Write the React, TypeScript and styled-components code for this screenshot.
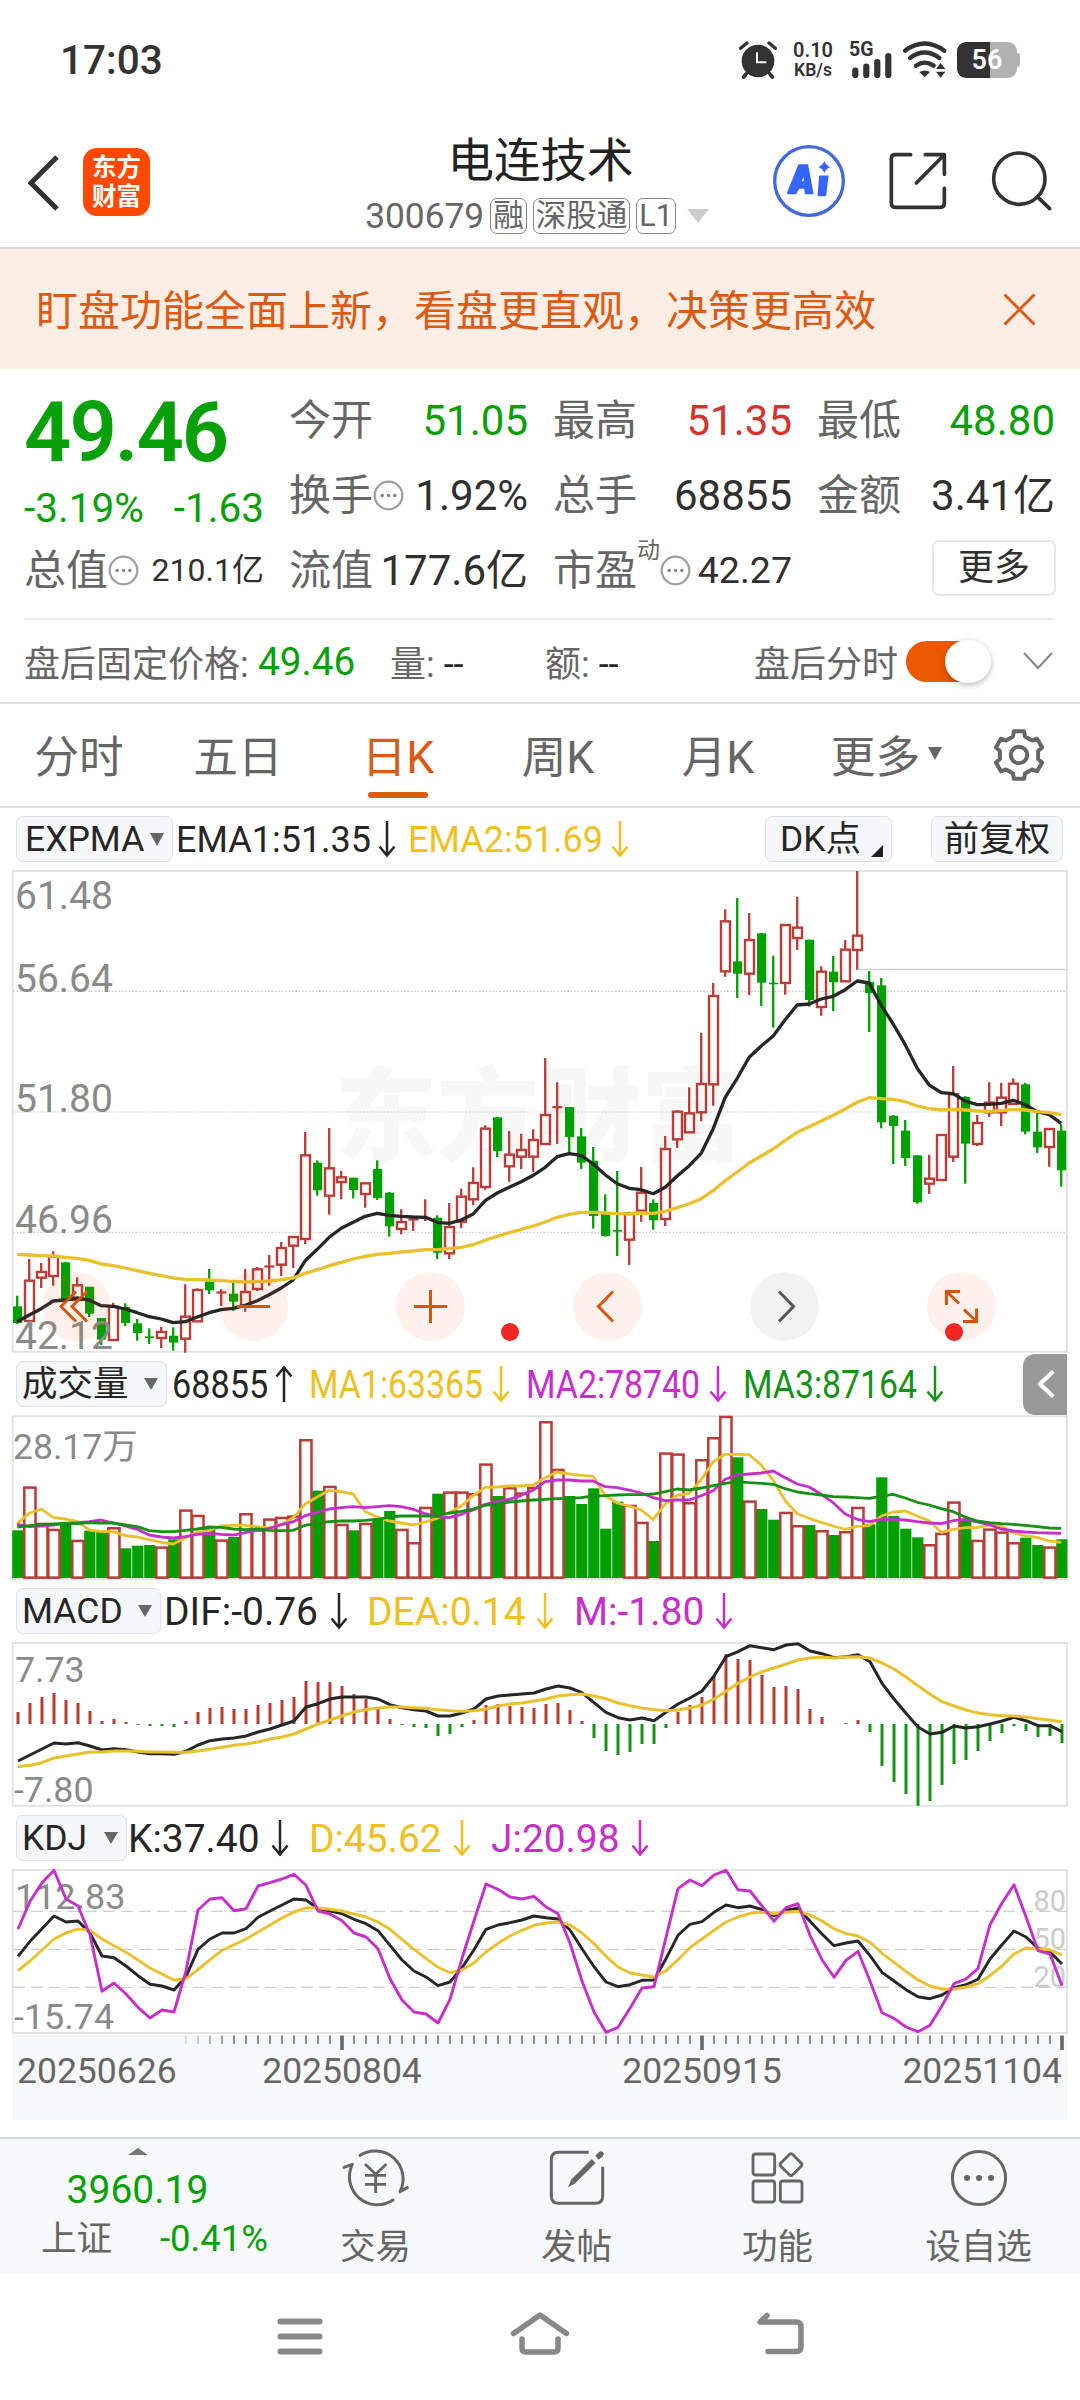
import React from "react";
import styled, { createGlobalStyle } from "styled-components";

const C = {
  green: "#08a008",
  red: "#d8322e",
  barRed: "#bb3b37",
  barGreen: "#00a000",
  orange: "#dc5a12",
  ink: "#262626",
  gray: "#666",
  axis: "#8a8a8a",
  line: "#e2e2e2",
  yellow: "#efc022",
  purple: "#c62fca",
  darkGreen: "#169116",
  black: "#262626",
};

const Global = createGlobalStyle`
  html, body { margin: 0; padding: 0; background: #fff; }
  * { box-sizing: border-box; }
  body { font-family: Roboto, "Noto Sans CJK SC", sans-serif; color: ${C.ink}; }
  svg { display: block; flex: none; overflow: visible; }
`;

/* ---------- chart data, in thirds of a pixel below each panel's origin ---------- */

const nums = (s: string) => s.trim().split(/\s+/).map(Number);

const candles = `G 1307 1340 1388 1392|R 1197 1262 1383 1385|R 1209 1236 1253 1284|R 1174 1190 1248 1277|G 1206 1208 1318 1318|R 1252 1276 1320 1320|G 1281 1281 1360 1371|G 1374 1375 1438 1455|R 1328 1340 1440 1440|G 1330 1342 1388 1398|G 1377 1391 1418 1442|G 1405 1430 1431 1452|R 1400 1416 1434 1464|G 1402 1428 1447 1472|R 1273 1370 1436 1478|R 1285 1290 1384 1384|G 1227 1265 1290 1302|R 1287 1296 1300 1338|G 1268 1302 1324 1353|R 1227 1296 1338 1355|R 1221 1228 1287 1293|R 1185 1218 1219 1277|R 1146 1164 1214 1248|R 1130 1131 1157 1224|R 816 886 1137 1152|G 901 909 990 1007|R 804 925 1007 1064|R 933 952 966 1018|G 953 954 989 1015|R 968 970 1002 1043|G 901 928 1013 1020|G 996 999 1098 1130|R 1048 1086 1107 1123|R 1075 1077 1080 1113|R 1018 1072 1073 1083|G 1066 1074 1177 1197|R 1029 1101 1180 1197|R 986 1010 1085 1105|R 922 969 1018 1036|R 796 806 981 989|G 771 773 872 891|R 813 884 919 965|R 821 870 890 927|R 808 840 890 936|R 594 765 852 852|R 667 740 741 852|G 741 742 830 880|G 804 830 907 927|G 861 903 1067 1106|G 1003 1060 1127 1130|G 933 1111 1113 1188|R 1055 1060 1139 1215|R 921 998 1052 1085|G 1018 1030 1080 1109|R 828 867 1077 1098|R 751 755 838 864|R 682 760 817 817|R 518 672 757 784|R 369 408 673 737|R 148 184 334 350|G 114 305 340 414|R 159 240 341 405|G 219 221 367 438|G 287 369 371 503|R 194 195 369 404|R 110 203 234 270|G 239 240 419 440|R 319 335 441 467|G 288 336 366 453|R 240 269 364 364|R 33 227 270 329|G 333 367 398 516|G 354 377 786 805|G 765 768 797 912|G 780 813 893 918|G 885 887 1026 1031|R 884 956 971 1002|R 823 825 960 960|R 618 703 890 906|G 708 712 850 971|R 765 789 852 858|R 667 728 757 771|R 668 713 757 799|R 655 671 732 732|G 669 674 814 823|G 757 816 861 879|R 806 807 861 920|G 792 813 930 980`
  .split("|")
  .map((row) => {
    const [side, ...v] = row.split(" ");
    return { up: side === "R", v: v.map(Number) };
  });

const ema1 = nums(`1385 1365 1346 1323 1320 1314 1320 1337 1339 1347 1358 1370 1377 1388 1385 1371 1358 1349 1345 1336 1322 1304 1284 1260 1202 1168 1132 1105 1087 1069 1060 1066 1069 1071 1072 1087 1090 1080 1062 1022 999 982 965 946 922 890 881 886 912 944 971 985 989 1001 982 948 917 880 806 712 655 592 558 528 479 435 432 417 409 389 363 369 436 492 554 625 675 698 701 723 734 733 730 721 734 755 764 790`);
const ema2 = nums(`1183 1185 1187 1188 1192 1195 1201 1212 1217 1224 1232 1240 1247 1254 1258 1259 1260 1262 1264 1266 1265 1263 1259 1254 1240 1229 1217 1207 1197 1189 1183 1180 1176 1173 1169 1169 1166 1162 1154 1141 1129 1118 1108 1098 1086 1072 1063 1057 1057 1059 1061 1062 1059 1060 1054 1043 1031 1016 992 962 936 909 888 867 841 817 800 783 766 747 727 713 716 718 725 738 746 750 748 750 753 754 752 748 750 755 758 764`);

const volumes = nums(`541 411 520 538 523 571 542 545 533 595 587 585 591 568 480 496 535 570 561 491 540 507 502 498 269 422 409 523 541 520 505 483 538 578 472 431 426 426 431 342 438 413 429 412 215 358 438 462 415 536 455 466 517 573 309 312 458 329 263 199 322 453 477 509 487 527 525 542 555 545 472 523 382 498 536 562 584 550 456 510 571 537 546 578 563 585 591 568`);
const ma1 = nums(`520 490 477 502 507 514 540 545 545 557 561 569 577 582 564 547 542 528 526 526 530 534 524 503 462 441 421 425 432 485 501 513 519 525 516 505 488 468 437 412 411 408 408 405 383 366 372 376 379 437 459 468 480 509 462 436 430 389 335 313 313 314 345 391 452 491 505 517 528 538 529 527 498 486 483 498 512 547 538 533 533 525 528 548 558 562 573 577`);
const ma2 = nums(`523 530 528 525 520 518 515 510 519 528 538 555 561 564 560 553 550 553 555 548 541 535 524 515 497 487 477 473 470 473 470 467 470 478 491 500 503 493 480 463 455 448 436 420 395 390 390 393 393 410 413 420 429 443 452 450 450 437 422 388 375 372 369 363 383 402 411 433 458 492 508 515 508 508 510 515 519 521 512 508 516 524 537 543 546 548 549 550`);
const ma3 = nums(`531 527 524 522 520 521 518 519 519 525 530 542 545 545 541 537 531 532 537 539 537 541 542 541 526 520 515 513 513 511 508 501 498 498 498 497 489 484 477 466 462 456 453 450 448 446 445 443 438 437 435 434 434 432 425 417 420 414 407 400 395 398 400 403 416 426 431 435 440 441 443 445 438 433 444 457 465 476 485 501 513 518 521 523 526 530 534 535`);

const hist = nums(`1086 1059 1041 1029 1050 1059 1083 1113 1107 1116 1125 1128 1128 1131 1113 1086 1074 1071 1077 1077 1065 1059 1050 1041 993 996 996 1008 1032 1047 1074 1107 1125 1131 1134 1158 1152 1131 1110 1065 1062 1068 1071 1074 1062 1059 1080 1113 1164 1203 1215 1206 1182 1182 1134 1086 1065 1041 978 912 927 930 975 1011 1008 1017 1077 1101 1122 1119 1110 1146 1248 1296 1332 1367 1353 1305 1242 1230 1203 1173 1149 1128 1143 1161 1158 1179`);
const dif = nums(`1233 1215 1197 1179 1182 1178 1188 1200 1196 1199 1206 1211 1211 1213 1204 1185 1172 1167 1164 1158 1146 1137 1125 1113 1071 1061 1047 1041 1041 1041 1047 1064 1073 1079 1083 1098 1098 1089 1077 1047 1038 1035 1032 1029 1017 1008 1014 1028 1058 1087 1103 1110 1104 1112 1087 1062 1044 1023 978 920 905 887 893 899 885 881 903 911 923 920 914 935 1000 1047 1090 1131 1152 1147 1128 1134 1130 1122 1113 1102 1112 1127 1127 1145`);
const dea = nums(`1250 1246 1238 1224 1218 1212 1206 1206 1203 1203 1204 1206 1206 1207 1207 1203 1198 1192 1186 1182 1176 1167 1161 1152 1137 1122 1110 1098 1086 1079 1074 1071 1071 1073 1075 1079 1082 1084 1082 1077 1068 1062 1059 1053 1047 1038 1034 1032 1038 1046 1059 1067 1074 1079 1082 1080 1074 1065 1047 1024 1000 981 965 954 942 930 924 921 924 921 920 924 939 957 981 1007 1033 1055 1068 1080 1089 1094 1097 1098 1101 1106 1110 1116`);

const kK = nums(`469 424 386 348 366 363 399 468 473 498 527 553 558 570 530 448 417 399 399 386 352 333 315 297 300 326 333 341 358 371 392 436 480 513 531 557 546 503 449 388 375 368 360 348 353 357 390 446 500 546 560 554 541 540 476 406 373 365 337 315 323 318 329 347 331 325 364 402 437 429 423 467 517 543 569 590 596 585 563 554 538 477 434 393 411 445 456 492`);
const kD = nums(`512 483 450 417 399 387 391 417 437 457 480 504 522 540 536 509 479 451 434 417 396 375 354 336 324 324 328 333 342 351 366 388 418 448 475 502 518 510 489 456 430 408 391 376 369 366 375 399 431 469 501 519 525 531 512 479 443 417 391 366 351 340 337 341 337 334 345 363 386 401 408 427 460 487 514 540 558 567 567 561 551 527 498 462 444 447 450 465`);
const kJ = nums(`387 304 248 211 297 318 404 574 549 582 622 654 630 636 513 330 297 293 332 326 258 248 237 223 256 333 342 362 399 411 446 536 600 636 642 669 598 475 362 252 268 291 297 289 321 341 430 543 636 697 682 625 564 560 412 266 240 257 225 211 269 273 318 364 323 311 406 479 532 481 454 543 638 655 681 695 676 617 551 537 505 374 309 254 350 452 462 557`);

const cx = (i: number) => 17.2 + i * 12;

const Line = ({ data, base, color, w = 3.3, dx = 0 }: { data: number[]; base: number; color: string; w?: number; dx?: number }) => (
  <polyline
    fill="none"
    stroke={color}
    strokeWidth={w}
    strokeLinejoin="round"
    points={data.map((v, i) => `${cx(i) + dx},${(base + v / 3).toFixed(1)}`).join(" ")}
  />
);

/* ---------- page parts ---------- */

const Page = styled.div`
  width: 1080px;
  height: 2400px;
  display: flex;
  flex-direction: column;
  background: #fff;
  overflow: hidden;
`;

const StatusBar = styled.div`
  height: 120px;
  flex: none;
  display: flex;
  align-items: center;
  padding: 0 60px 0 60px;
`;
const Clock = styled.div`
  font-size: 40.5px;
  font-weight: 500;
  color: #333;
  margin-right: auto;
`;
const NetSpeed = styled.div`
  width: 46px;
  margin: 0 14px 0 13px;
  text-align: center;
  font-size: 20px;
  line-height: 20px;
  font-weight: 600;
  color: #333;
  white-space: nowrap;
`;
const SpeedUnit = styled.div`
  font-size: 17.5px;
`;
const Battery = styled.div`
  width: 60px;
  height: 36px;
  margin-left: 9px;
  border-radius: 9px;
  background: linear-gradient(90deg, #333 55%, #b1b1b1 55%);
  color: #fff;
  font-size: 27px;
  font-weight: 600;
  line-height: 36px;
  text-align: center;
`;
const BatteryTip = styled.div`
  width: 3px;
  height: 14px;
  background: #b1b1b1;
  border-radius: 0 3px 3px 0;
`;

const Header = styled.header`
  height: 129px;
  flex: none;
  display: flex;
  align-items: flex-start;
  border-bottom: 2px solid #d9d9d9;
`;
const HeaderSide = styled.div<{ $w: number; $pl: number; $gap: number }>`
  width: ${(p) => p.$w}px;
  padding: 25px 0 0 ${(p) => p.$pl}px;
  display: flex;
  align-items: center;
  gap: ${(p) => p.$gap}px;
`;
const Logo = styled.div`
  width: 67px;
  height: 68px;
  margin: 3px 0 0 -1px;
  border-radius: 14px;
  background: #ff4800;
  color: #fff;
  font-size: 24.5px;
  font-weight: 700;
  line-height: 29px;
  text-align: center;
  padding-top: 5px;
`;
const Titles = styled.div`
  width: 440px;
  padding-top: 11px;
  display: flex;
  flex-direction: column;
  align-items: center;
`;
const Title = styled.div`
  font-size: 46.5px;
  line-height: 60px;
  color: #222;
  margin-left: -1px;
`;
const Sub = styled.div`
  display: flex;
  align-items: center;
  height: 36px;
  margin: 7px 0 0 -8px;
  font-size: 35.3px;
  color: ${C.gray};
`;
const Tag = styled.span`
  height: 36px;
  margin-left: 6px;
  padding: 0 2px;
  border: 1.5px solid #888;
  border-radius: 7px;
  font-size: 30.5px;
  line-height: 33px;
`;

const Caret = styled.span<{ $w: number; $h: number; $color?: string; $ml?: number }>`
  width: 0;
  height: 0;
  flex: none;
  margin-left: ${(p) => p.$ml ?? 0}px;
  border-left: ${(p) => p.$w / 2}px solid transparent;
  border-right: ${(p) => p.$w / 2}px solid transparent;
  border-top: ${(p) => p.$h}px solid ${(p) => p.$color ?? C.gray};
`;

const Banner = styled.div`
  height: 120px;
  flex: none;
  display: flex;
  align-items: center;
  justify-content: space-between;
  padding: 0 44px 0 36px;
  background: #fdeee5;
  color: ${C.orange};
  font-size: 42px;
  line-height: 60px;
`;
const BannerText = styled.span`
  padding-top: 6px;
`;

const Quote = styled.section`
  height: 335px;
  flex: none;
  padding: 14px 25px 0 24px;
  border-bottom: 2px solid #dcdcdc;
`;
const QuoteGrid = styled.div`
  display: grid;
  grid-template-columns: 240px 239px 239px 238px;
  grid-template-rows: repeat(3, 75px);
  column-gap: 25px;
  height: 235px;
`;
const Last = styled.div`
  grid-row: 1 / 3;
  display: flex;
  flex-direction: column;
  color: ${C.green};
`;
const Price = styled.div`
  font-size: 83px;
  font-weight: 600;
  letter-spacing: -2px;
  line-height: 100px;
`;
const Changes = styled.div`
  display: flex;
  justify-content: space-between;
  font-size: 40.5px;
  line-height: 51px;
`;
const Cell = styled.div<{ $size?: number; $color?: string }>`
  display: flex;
  align-items: center;
  font-size: 42px;
  line-height: 75px;
  color: ${C.gray};
  white-space: nowrap;
  & > b {
    font-weight: 400;
    margin-left: auto;
    font-size: ${(p) => p.$size ?? 42}px;
    color: ${(p) => p.$color ?? "#303030"};
  }
`;
const Sup = styled.sup`
  font-size: 23px;
  line-height: 24px;
  align-self: flex-start;
  margin-top: 6px;
`;
const MoreButton = styled.button`
  width: 124px;
  height: 56px;
  margin: 7px -1px 0 auto;
  padding: 0;
  background: #fff;
  border: 2px solid #e6e6e6;
  border-radius: 7px;
  font: inherit;
  font-size: 36px;
  line-height: 48px;
  color: #303030;
`;
const AfterHours = styled.div`
  height: 84px;
  border-top: 2px solid #ececec;
  display: flex;
  align-items: center;
  font-size: 36px;
  color: ${C.gray};
  white-space: nowrap;
`;
const Slot = styled.span<{ $w?: number; $color?: string; $size?: number }>`
  ${(p) => (p.$w ? `width: ${p.$w}px;` : "")}
  color: ${(p) => p.$color ?? "inherit"};
  font-size: ${(p) => p.$size ?? 36}px;
`;
const Toggle = styled.span`
  width: 80px;
  height: 41px;
  margin: 0 31px 0 8px;
  border-radius: 21px;
  background: #ec5800;
  display: flex;
  align-items: center;
  padding-left: 39px;
  &::after {
    content: "";
    flex: none;
    width: 46px;
    height: 43px;
    border-radius: 22px;
    background: #fff;
    box-shadow: 0 2px 6px rgba(0, 0, 0, 0.28);
  }
`;
const Expander = styled.span`
  margin: 0 2px 0 auto;
`;

const Tabs = styled.nav`
  height: 104px;
  flex: none;
  display: grid;
  grid-template-columns: 158px 160px 160px 160px 160px 177px 105px;
  border-bottom: 2px solid #dcdcdc;
`;
const Tab = styled.div<{ $active?: boolean }>`
  display: flex;
  align-items: center;
  justify-content: center;
  padding-bottom: 4px;
  font-size: 44.7px;
  color: ${(p) => (p.$active ? C.orange : C.gray)};
  position: relative;
  ${(p) =>
    p.$active
      ? `&::after { content: ""; position: absolute; bottom: 8px; left: 50px; width: 60px; height: 6px; border-radius: 3px; background: ${C.orange}; }`
      : ""}
`;
const SettingsTab = styled.div`
  display: flex;
  align-items: center;
  padding-left: 18px;
`;

const IndicatorRow = styled.div<{ $h: number }>`
  height: ${(p) => p.$h}px;
  flex: none;
  display: flex;
  align-items: center;
  padding-left: 16px;
  white-space: nowrap;
`;
const Picker = styled.button<{ $w: number; $ml?: number; $center?: boolean; $pl?: number }>`
  width: ${(p) => p.$w}px;
  height: 46px;
  flex: none;
  margin: 0 0 0 ${(p) => p.$ml ?? 0}px;
  padding: 0 ${(p) => (p.$center ? 5 : 8)}px 0 ${(p) => p.$pl ?? 5}px;
  display: flex;
  align-items: center;
  justify-content: ${(p) => (p.$center ? "center" : "space-between")};
  background: #f6f7fa;
  border: 1.5px solid #dfe1e6;
  border-radius: 7px;
  font: inherit;
  font-size: 35.5px;
  line-height: 42px;
  color: ${C.ink};
`;
const Reading = styled.div<{ $w: number; $ml: number; $color?: string; $size?: number; $squeeze?: number }>`
  width: ${(p) => p.$w}px;
  flex: none;
  margin-left: ${(p) => p.$ml}px;
  display: flex;
  align-items: center;
  justify-content: space-between;
  color: ${(p) => p.$color ?? C.ink};
  font-size: ${(p) => p.$size ?? 38}px;
  line-height: 46px;
  & > span {
    min-width: 0;
    padding-top: 2px;
    transform-origin: left;
    transform: scaleX(${(p) => p.$squeeze ?? 1});
  }
`;
const Corner = styled.i`
  align-self: flex-end;
  margin-bottom: 4px;
  border-left: 12px solid transparent;
  border-bottom: 12px solid #222;
`;
const SideHandle = styled.div`
  width: 44px;
  height: 61px;
  margin: 0 13px 0 auto;
  border-radius: 12px 0 0 12px;
  background: #999;
  display: flex;
  align-items: center;
  justify-content: center;
`;

const Panel = styled.div<{ $h: number }>`
  position: relative;
  width: 1056px;
  height: ${(p) => p.$h}px;
  flex: none;
  margin-left: 12px;
`;
const Controls = styled.div`
  position: absolute;
  left: 30px;
  bottom: 12px;
  display: flex;
  gap: 108px;
`;
const Round = styled.div<{ $muted?: boolean }>`
  width: 69px;
  height: 69px;
  border-radius: 50%;
  display: flex;
  align-items: center;
  justify-content: center;
  color: ${(p) => (p.$muted ? "#555" : "#d4570f")};
  background: ${(p) => (p.$muted ? "rgba(0,0,0,.05)" : "rgba(240,90,20,.09)")};
`;
const Dot = styled.i<{ $x: number }>`
  position: absolute;
  left: ${(p) => p.$x}px;
  bottom: 12px;
  width: 18px;
  height: 18px;
  border-radius: 50%;
  background: #ef2722;
`;
const Axis = styled.div`
  width: 1056px;
  height: 85px;
  margin: 1px 0 17px 12px;
  flex: none;
  background: #f7f8fa;
`;

const BottomBar = styled.footer`
  height: 137px;
  flex: none;
  display: flex;
  background: #f6f8fa;
  border-top: 2px solid #d6d8da;
`;
const IndexBox = styled.div`
  width: 275px;
  display: flex;
  flex-direction: column;
  align-items: center;
  padding-top: 9px;
  color: ${C.green};
`;
const UpMark = styled.i`
  border-left: 10px solid transparent;
  border-right: 10px solid transparent;
  border-bottom: 7px solid #777;
`;
const IndexValue = styled.div`
  font-size: 39px;
  line-height: 46px;
  margin-top: 12px;
`;
const IndexLine = styled.div`
  width: 227px;
  display: flex;
  justify-content: space-between;
  align-items: center;
  font-size: 36.5px;
  line-height: 46px;
  margin: 3px 0 0 34px;
`;
const Muted = styled.span`
  color: ${C.gray};
  font-size: 35.5px;
`;
const Action = styled.div`
  width: 201px;
  display: flex;
  flex-direction: column;
  align-items: center;
  padding-top: 8px;
  font-size: 35.5px;
  line-height: 46px;
  color: ${C.gray};
  & > svg {
    margin-bottom: 15px;
  }
`;
const NavBar = styled.div`
  flex: 1;
  display: flex;
  justify-content: center;
  gap: 180px;
  padding-top: 30px;
`;

/* ---------- small drawings ---------- */

const Arrow = ({ up }: { up?: boolean }) => (
  <svg width="18" height="38" viewBox="0 0 18 38" fill="none" stroke="currentColor" strokeWidth="2.5" transform={up ? "rotate(180)" : undefined}>
    <path d="M9 1V36M1.5 26.5L9 35.5L16.5 26.5" />
  </svg>
);

const Info = () => (
  <svg width="31" height="31" viewBox="0 0 31 31" fill="none">
    <circle cx="15.5" cy="15.5" r="13.8" stroke="#a0a0a0" strokeWidth="2.3" />
    <g fill="#888">
      <circle cx="9.2" cy="15.5" r="1.8" />
      <circle cx="15.5" cy="15.5" r="1.8" />
      <circle cx="21.8" cy="15.5" r="1.8" />
    </g>
  </svg>
);

const gearPath = (() => {
  const pts: string[] = [];
  for (let k = 0; k < 6; k++) {
    const a = -90 + k * 60;
    ([[-18, 19.5], [-12, 24.3], [12, 24.3], [18, 19.5]] as number[][]).forEach(([d, r]) => {
      const t = ((a + d) * Math.PI) / 180;
      pts.push(`${(26 + r * Math.cos(t)).toFixed(1)} ${(26 + r * Math.sin(t)).toFixed(1)}`);
    });
  }
  return `M${pts.join("L")}Z`;
})();

const Gear = () => (
  <svg width="52" height="52" viewBox="0 0 52 52" fill="none" stroke="#666" strokeWidth="4" strokeLinejoin="round">
    <path d={gearPath} />
    <circle cx="26" cy="26" r="8.2" />
  </svg>
);

const WifiSvg = styled.svg`
  margin-left: 8px;
`;

const StatusIcons = () => (
  <>
    <svg width="38" height="38" viewBox="0 0 114 114" fill="none" stroke="#333">
      <circle cx="57" cy="60" r="49" fill="#333" stroke="none" />
      <path d="M5 22L24 6M109 22L90 6" strokeWidth="10" strokeLinecap="round" />
      <path d="M22 98L14 108M92 98L100 108" strokeWidth="11" strokeLinecap="round" />
      <path d="M54 34V64H82" stroke="#fff" strokeWidth="6" />
    </svg>
    <NetSpeed>
      0.10
      <SpeedUnit>KB/s</SpeedUnit>
    </NetSpeed>
    <svg width="44" height="38" viewBox="0 0 44 38">
      <text x="-1" y="14.5" fontSize="19.5" fontWeight="700" fill="#333">5G</text>
      <g stroke="#333" strokeWidth="6.2" strokeLinecap="round">
        <path d="M5.3 29.5V34M16.3 25.5V34M27.3 21V34M38.3 15V34" />
      </g>
    </svg>
    <WifiSvg width="46" height="38" viewBox="0 0 138 114" fill="none" stroke="#333" strokeWidth="13" strokeLinecap="round">
      <path d="M9 29Q68 -14 127 29M24 51Q68 18 112 51M42 74Q68 56 95 74" />
      <path d="M52 93Q68 84 84 93L68 109Z" fill="#333" stroke="none" />
      <path d="M116 66L130 84H102ZM116 110L130 92H102Z" fill="#333" stroke="none" />
    </WifiSvg>
  </>
);

const Frame = ({ y, h }: { y: number; h: number }) => (
  <rect x="12.7" y={y} width="1054.3" height={h} fill="none" stroke={C.line} strokeWidth="1.8" />
);

const MainChart = () => (
  <svg width="1056" height="483" viewBox="12 870 1056 483">
    <text x="335" y="1153" fontSize="102" fontWeight="900" fill="#f7f7f7" textLength="408">东方财富</text>
    <Frame y={871} h={480.7} />
    {[991.3, 1112, 1232.3].map((y) => (
      <path key={y} d={`M13 ${y}H1067`} stroke="#cfcfcf" strokeWidth="1.2" strokeDasharray="1.8 1.6" />
    ))}
    <path d="M857 969.3H1067" stroke="#d2d2d2" strokeWidth="1.3" />
    {candles.map(({ up, v }, i) => {
      const [hi, a, b, lo] = v.map((n) => 860 + n / 3);
      const x = cx(i);
      const color = up ? C.barRed : C.barGreen;
      return (
        <g key={i}>
          <path d={up ? `M${x} ${hi}V${a}M${x} ${b}V${lo}` : `M${x} ${hi}V${lo}`} stroke={color} strokeWidth="2.3" />
          {up ? (
            b - a < 2 ? (
              <rect x={x - 4.8} y={a - 0.6} width="10" height="2.2" fill={color} />
            ) : (
              <rect x={x - 4.2} y={a} width="9" height={b - a} fill="none" stroke={color} strokeWidth="2.4" />
            )
          ) : (
            <rect x={x - 4.2} y={a - 0.3} width="9.2" height={Math.max(b - a, 1) + 0.6} fill={color} />
          )}
        </g>
      );
    })}
    <g fontSize="39" fill={C.axis}>
      <text x="15" y="909.3">61.48</text>
      <text x="15" y="992">56.64</text>
      <text x="15" y="1112">51.80</text>
      <text x="15" y="1233">46.96</text>
      <text x="15" y="1349">42.12</text>
    </g>
    <Line data={ema1} base={860} color={C.black} />
    <Line data={ema2} base={860} color="#eac12c" />
  </svg>
);

const VolumeChart = () => (
  <svg width="1056" height="165" viewBox="12 1415 1056 165">
    <Frame y={1416.3} h={162.7} />
    <text x="13" y="1459" fontSize="35.6" fill={C.axis}>28.17万</text>
    {volumes.map((v, i) => {
      const top = 1350 + v / 3;
      return candles[i].up ? null : <rect key={i} x={cx(i) - 5} y={top} width="11.2" height={1578 - top} fill={C.barGreen} />;
    })}
    {volumes.map((v, i) => {
      const top = 1350 + v / 3;
      return candles[i].up ? (
        <rect key={i} x={cx(i) - 4.9} y={top + 0.6} width="11.2" height={1577 - top} fill="#fff" stroke={C.barRed} strokeWidth="2.5" />
      ) : null;
    })}
    <Line data={ma1} base={1350} color="#eac12c" w={2.8} />
    <Line data={ma2} base={1350} color={C.purple} w={2.8} />
    <Line data={ma3} base={1350} color={C.darkGreen} w={2.8} />
  </svg>
);

const MacdChart = () => (
  <svg width="1056" height="165" viewBox="12 1642 1056 165">
    <Frame y={1643} h={162.7} />
    <g fontSize="35.7" fill={C.axis}>
      <text x="15" y="1682">7.73</text>
      <text x="14" y="1802">-7.80</text>
    </g>
    {hist.map((v, i) => (
      <path key={i} d={`M${cx(i) + 0.8} 1724V${1350 + v / 3}`} stroke={v < 1122 ? C.barRed : C.darkGreen} strokeWidth="3" />
    ))}
    <Line data={dif} base={1350} color={C.black} w={3} dx={0.8} />
    <Line data={dea} base={1350} color="#eac12c" w={3} dx={0.8} />
  </svg>
);

const KdjChart = () => (
  <svg width="1056" height="165" viewBox="12 1869 1056 165">
    <Frame y={1870} h={163} />
    {[1911.3, 1949.3, 1987.3].map((y) => (
      <path key={y} d={`M13 ${y}H1067`} stroke="#cfcfcf" strokeWidth="1.3" strokeDasharray="12 6" />
    ))}
    <g fontSize="35.9" fill={C.axis}>
      <text x="15" y="1908.7">112.83</text>
      <text x="14" y="2029">-15.74</text>
    </g>
    <g fontSize="29" fill="#ccc" textAnchor="end">
      <text x="1066" y="1911">80</text>
      <text x="1066" y="1949">50</text>
      <text x="1066" y="1987">20</text>
    </g>
    <Line data={kK} base={1800} color={C.black} w={2.9} dx={0.8} />
    <Line data={kD} base={1800} color="#eac12c" w={2.9} dx={0.8} />
    <Line data={kJ} base={1800} color={C.purple} w={2.9} dx={0.8} />
  </svg>
);

const TimeAxis = () => (
  <svg width="1056" height="85" viewBox="12 2036 1056 85">
    {Array.from({ length: 74 }, (_, k) => k + 14).map((i) => {
      const big = i === 27 || i === 57 || i === 87;
      return (
        <path
          key={i}
          d={`M${cx(i) + 0.8} 2036.5V${big ? 2051 : 2045}`}
          stroke={big ? "#666" : "#8c8c8c"}
          strokeWidth={big ? 3.6 : 2}
          opacity={i < 18 ? (i - 12.5) / 6 : 1}
        />
      );
    })}
    <g fontSize="35.5" fill="#666">
      <text x="17" y="2084">20250626</text>
      <text x="342" y="2084" textAnchor="middle">20250804</text>
      <text x="702" y="2084" textAnchor="middle">20250915</text>
      <text x="1062" y="2084" textAnchor="end">20251104</text>
    </g>
  </svg>
);

const stroke = { fill: "none", stroke: "currentColor", strokeWidth: 3 };

export default function App() {
  return (
    <Page>
      <Global />
      <StatusBar>
        <Clock>17:03</Clock>
        <StatusIcons />
        <Battery>56</Battery>
        <BatteryTip />
      </StatusBar>

      <Header>
        <HeaderSide $w={321} $pl={26} $gap={24}>
          <svg width="34" height="62" viewBox="0 -4 34 62" fill="none" stroke="#333" strokeWidth="5">
            <path d="M31 3L5 29L31 55" />
          </svg>
          <Logo>东方<br />财富</Logo>
        </HeaderSide>
        <Titles>
          <Title>电连技术</Title>
          <Sub>
            300679
            <Tag>融</Tag>
            <Tag>深股通</Tag>
            <Tag>L1</Tag>
            <Caret $w={22} $h={14} $color="#ccc" $ml={11} />
          </Sub>
        </Titles>
        <HeaderSide $w={319} $pl={12} $gap={43}>
          <svg width="72" height="72" viewBox="0 0 216 216">
            <circle cx="108" cy="108" r="103" fill="none" stroke="#4468e0" strokeWidth="10" />
            <path fillRule="evenodd" fill="#3565fb" stroke="#3565fb" strokeWidth="5" strokeLinejoin="round" d="M78 60H103L119 145H98L96 129H77L68 145H44ZM93 83L83 111H95Z" />
            <path fill="#3565fb" stroke="#3565fb" strokeWidth="5" strokeLinejoin="round" d="M141 94H164L157 151H136Z" />
            <path fill="#3565fb" d="M154 48Q159 61 172 66Q159 71 154 84Q149 71 136 66Q149 61 154 48Z" />
          </svg>
          <svg width="60" height="60" viewBox="0 0 180 180" fill="none" stroke="#333" strokeWidth="11" strokeLinecap="round" strokeLinejoin="round">
            <path d="M68 11H22Q10 11 10 23V157Q10 169 22 169H157Q169 169 169 157V112M112 11H169V70M166 14L85 96" />
          </svg>
          <svg width="62" height="62" viewBox="0 0 186 186" fill="none" stroke="#333" strokeWidth="11" strokeLinecap="round">
            <circle cx="85" cy="86" r="77" />
            <path d="M142 143L176 176" />
          </svg>
        </HeaderSide>
      </Header>

      <Banner>
        <BannerText>盯盘功能全面上新，看盘更直观，决策更高效</BannerText>
        <svg width="33" height="33" viewBox="0 0 33 33" fill="none" stroke={C.orange} strokeWidth="3">
          <path d="M1.5 1.5L31.5 31.5M31.5 1.5L1.5 31.5" />
        </svg>
      </Banner>

      <Quote>
        <QuoteGrid>
          <Last>
            <Price>49.46</Price>
            <Changes>
              <span>-3.19%</span>
              <span>-1.63</span>
            </Changes>
          </Last>
          <Cell $color={C.green}>今开<b>51.05</b></Cell>
          <Cell $color={C.red}>最高<b>51.35</b></Cell>
          <Cell $color={C.green}>最低<b>48.80</b></Cell>
          <Cell>换手<Info /><b>1.92%</b></Cell>
          <Cell>总手<b>68855</b></Cell>
          <Cell>金额<b>3.41亿</b></Cell>
          <Cell $size={32}>总值<Info /><b>210.1亿</b></Cell>
          <Cell>流值<b>177.6亿</b></Cell>
          <Cell $size={37.5}>市盈<Sup>动</Sup><Info /><b>42.27</b></Cell>
          <MoreButton>更多</MoreButton>
        </QuoteGrid>
        <AfterHours>
          <Slot $w={234}>盘后固定价格:</Slot>
          <Slot $w={132} $color={C.green} $size={38.7}>49.46</Slot>
          <Slot $w={155}>量: <Slot $color={C.ink}>--</Slot></Slot>
          <Slot $w={209}>额: <Slot $color={C.ink}>--</Slot></Slot>
          <Slot>盘后分时</Slot>
          <Toggle />
          <Expander>
            <svg width="30" height="18" viewBox="0 0 30 18" fill="none" stroke="#888" strokeWidth="2.2">
              <path d="M1 1L15 16L29 1" />
            </svg>
          </Expander>
        </AfterHours>
      </Quote>

      <Tabs>
        <Tab>分时</Tab>
        <Tab>五日</Tab>
        <Tab $active>日K</Tab>
        <Tab>周K</Tab>
        <Tab>月K</Tab>
        <Tab>更多<Caret $w={15} $h={13} $ml={8} /></Tab>
        <SettingsTab><Gear /></SettingsTab>
      </Tabs>

      <IndicatorRow $h={62}>
        <Picker $w={157} $pl={8}>EXPMA<Caret $w={15} $h={13} /></Picker>
        <Reading $w={220} $ml={3} $size={36}><span>EMA1:51.35</span><Arrow /></Reading>
        <Reading $w={221} $ml={12} $size={36} $color={C.yellow}><span>EMA2:51.69</span><Arrow /></Reading>
        <Picker $w={127} $ml={136} $pl={14}>DK点<Corner /></Picker>
        <Picker $w={132} $ml={39} $center>前复权</Picker>
      </IndicatorRow>
      <Panel $h={483}>
        <MainChart />
        <Controls>
          <Round>
            <svg width="33" height="33" viewBox="0 0 33 33" {...stroke}><path d="M16 1.5L1 16.5L16 31.5M27 1.5L12 16.5L27 31.5" /></svg>
          </Round>
          <Round>
            <svg width="33" height="33" viewBox="0 0 33 33" {...stroke}><path d="M0 16.5H33" /></svg>
          </Round>
          <Round>
            <svg width="33" height="33" viewBox="0 0 33 33" {...stroke}><path d="M0 16.5H33M16.5 0V33" /></svg>
          </Round>
          <Round>
            <svg width="33" height="33" viewBox="0 0 33 33" {...stroke}><path d="M22 1.5L7.5 16.5L22 31.5" /></svg>
          </Round>
          <Round $muted>
            <svg width="33" height="33" viewBox="0 0 33 33" {...stroke}><path d="M11 1.5L25.5 16.5L11 31.5" /></svg>
          </Round>
          <Round>
            <svg width="33" height="33" viewBox="0 0 33 33" {...stroke}><path d="M1.4 15V1.4H15M2 2L14 13.5M31.6 18.5V31.6H18M31 31L19 19.5" /></svg>
          </Round>
        </Controls>
        <Dot $x={489} />
        <Dot $x={933} />
      </Panel>

      <IndicatorRow $h={62}>
        <Picker $w={151}>成交量<Caret $w={15} $h={12} /></Picker>
        <Reading $w={121} $ml={5} $squeeze={0.9}><span>68855</span><Arrow up /></Reading>
        <Reading $w={201} $ml={16} $squeeze={0.89} $color={C.yellow}><span>MA1:63365</span><Arrow /></Reading>
        <Reading $w={201} $ml={16} $squeeze={0.89} $color={C.purple}><span>MA2:78740</span><Arrow /></Reading>
        <Reading $w={201} $ml={16} $squeeze={0.89} $color={C.darkGreen}><span>MA3:87164</span><Arrow /></Reading>
        <SideHandle>
          <svg width="18" height="28" viewBox="0 0 18 28" fill="none" stroke="#fff" strokeWidth="4.2" strokeLinecap="round" strokeLinejoin="round">
            <path d="M16 2.5L4 14L16 25.5" />
          </svg>
        </SideHandle>
      </IndicatorRow>
      <Panel $h={165}><VolumeChart /></Panel>

      <IndicatorRow $h={62}>
        <Picker $w={145}>MACD<Caret $w={15} $h={12} /></Picker>
        <Reading $w={184} $ml={3} $size={39}><span>DIF:-0.76</span><Arrow /></Reading>
        <Reading $w={187} $ml={19} $size={39} $color={C.yellow}><span>DEA:0.14</span><Arrow /></Reading>
        <Reading $w={159} $ml={20} $size={39} $color={C.purple}><span>M:-1.80</span><Arrow /></Reading>
      </IndicatorRow>
      <Panel $h={165}><MacdChart /></Panel>

      <IndicatorRow $h={62}>
        <Picker $w={111}>KDJ<Caret $w={15} $h={12} /></Picker>
        <Reading $w={161} $ml={1} $size={38.9}><span>K:37.40</span><Arrow /></Reading>
        <Reading $w={162} $ml={20} $size={38.9} $color={C.yellow}><span>D:45.62</span><Arrow /></Reading>
        <Reading $w={158} $ml={20} $size={38.9} $color={C.purple}><span>J:20.98</span><Arrow /></Reading>
      </IndicatorRow>
      <Panel $h={165}><KdjChart /></Panel>
      <Axis><TimeAxis /></Axis>

      <BottomBar>
        <IndexBox>
          <UpMark />
          <IndexValue>3960.19</IndexValue>
          <IndexLine><Muted>上证</Muted>-0.41%</IndexLine>
        </IndexBox>
        <Action>
          <svg width="72" height="62" viewBox="60 21 216 186" fill="none" stroke="#666" strokeWidth="9" strokeLinecap="round" strokeLinejoin="round">
            <path d="M120 46A84 84 0 0 1 240 155L262 143M219 180A84 84 0 0 1 97 73L72 82" />
            <path d="M138 75L167 103L196 75M139 106H194M139 133H194M167 103V155" strokeLinecap="square" strokeWidth="8.5" />
          </svg>
          交易
        </Action>
        <Action>
          <svg width="58" height="62" viewBox="684 21 174 186" fill="none" stroke="#666" strokeWidth="9">
            <path d="M806 37H716Q694 37 694 59V168Q694 190 716 190H826Q848 190 848 168V80" />
            <path d="M760 124L821 63M831 53L843 42" strokeWidth="16" />
            <path d="M838 47L843 42" strokeWidth="16" strokeLinecap="round" />
            <path d="M754 118L766 130L744 142Z" fill="#666" stroke="none" />
          </svg>
          发帖
        </Action>
        <Action>
          <svg width="58" height="62" viewBox="1289 21 174 186" fill="none" stroke="#666" strokeWidth="8.5" strokeLinejoin="round">
            <rect x="1301" y="42" width="65" height="63" rx="8" />
            <rect x="1301" y="123" width="65" height="63" rx="8" />
            <rect x="1383" y="123" width="65" height="63" rx="8" />
            <rect x="1390" y="49" width="50" height="50" rx="7" transform="rotate(45 1415 74)" />
          </svg>
          功能
        </Action>
        <Action>
          <svg width="62" height="62" viewBox="0 0 62 62" fill="none" stroke="#666" strokeWidth="3">
            <circle cx="31" cy="31" r="26.6" />
            <g fill="#666" stroke="none">
              <circle cx="19" cy="31" r="3" />
              <circle cx="31" cy="31" r="3" />
              <circle cx="43" cy="31" r="3" />
            </g>
          </svg>
          设自选
        </Action>
      </BottomBar>

      <NavBar>
        <svg width="60" height="60" viewBox="0 0 60 60" stroke="#888" strokeWidth="6" strokeLinecap="round">
          <path d="M10.5 17.5H49.5M10.5 32.5H49.5M10.5 47.5H49.5" />
        </svg>
        <svg width="60" height="60" viewBox="0 0 60 60" fill="none" stroke="#888" strokeWidth="5.5" strokeLinecap="round" strokeLinejoin="round">
          <path d="M3.5 29.5L30 11L56.5 29.5M12 35V44Q12 48 16 48H44Q48 48 48 44V35" />
        </svg>
        <svg width="60" height="60" viewBox="0 0 60 60" fill="none" stroke="#888" strokeWidth="5.5" strokeLinecap="round" strokeLinejoin="round">
          <path d="M18 47.5H46Q51 47.5 51 42.5V23Q51 18 46 18H10L17 11.5" />
        </svg>
      </NavBar>
    </Page>
  );
}
